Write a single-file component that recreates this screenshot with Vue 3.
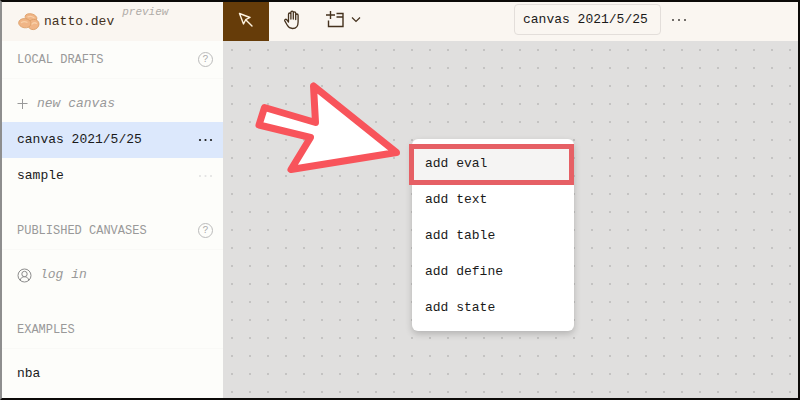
<script setup>
import { ref } from 'vue'

const title = ref('canvas 2021/5/25')
const drafts = [
  { name: 'canvas 2021/5/25', active: true },
  { name: 'sample', active: false },
]
const actions = ['add eval', 'add text', 'add table', 'add define', 'add state']
</script>

<template>
  <div class="app">
    <aside class="sidebar">
      <header class="brand">
        <svg class="logo" width="22" height="18" viewBox="0 0 22 18" aria-hidden="true">
          <g fill="#f0b586" stroke="#dc9f68" stroke-width=".8">
            <ellipse cx="13" cy="4.600" rx="6" ry="3.800" transform="rotate(14 13 4.600)" />
            <ellipse cx="15.500" cy="11.500" rx="5.600" ry="5" transform="rotate(-25 15.500 11.500)" />
            <ellipse cx="6.800" cy="10.200" rx="6.200" ry="4.600" transform="rotate(8 6.800 10.200)" />
          </g>
          <g fill="none" stroke="#f8d0a8" stroke-width="1.300" stroke-linecap="round">
            <path d="M10 3.800q3-1.300 6 .9M3.500 9.500q2.500-1.800 5.500-.2M14 11q2.500-2.200 4.500-.6" />
          </g>
        </svg>
        <a class="name" href="#">natto.dev</a>
        <em class="preview">preview</em>
      </header>

      <section>
        <h2>
          LOCAL DRAFTS
          <button class="help" aria-label="About local drafts">?</button>
        </h2>
        <ul>
          <li>
            <button class="row muted">
              <svg width="12" height="12" viewBox="0 0 12 12" aria-hidden="true">
                <path d="M5.500 1v10M.5 5.500h10" fill="none" stroke="#999" />
              </svg>
              <em>new canvas</em>
            </button>
          </li>
          <li v-for="draft in drafts" :key="draft.name" :class="{ active: draft.active }">
            <a class="row" href="#">{{ draft.name }}</a>
            <button class="more" :aria-label="'Options for ' + draft.name">
              <svg width="16" height="4" viewBox="0 0 16 4" fill="currentColor" aria-hidden="true">
                <circle cx="3" cy="2" r="1.100" /><circle cx="8.500" cy="2" r="1.100" /><circle cx="14" cy="2" r="1.100" />
              </svg>
            </button>
          </li>
        </ul>
      </section>

      <section>
        <h2>
          PUBLISHED CANVASES
          <button class="help" aria-label="About published canvases">?</button>
        </h2>
        <ul>
          <li>
            <button class="row muted">
              <svg width="15" height="15" viewBox="0 0 15 15" fill="none" stroke="#8c8c8c" aria-hidden="true">
                <circle cx="7.500" cy="7.500" r="6.500" />
                <circle cx="7.500" cy="6" r="2.700" />
                <path d="M3.200 12.500c.4-2.500 2-3.800 4.300-3.800s3.900 1.300 4.300 3.800" />
              </svg>
              <em>log in</em>
            </button>
          </li>
        </ul>
      </section>

      <section>
        <h2>EXAMPLES</h2>
        <ul>
          <li><a class="row" href="#">nba</a></li>
        </ul>
      </section>
    </aside>

    <main class="workspace">
      <div class="toolbar">
        <button class="tool selected" aria-label="Select">
          <svg width="16" height="16" viewBox="0 0 16 16" fill="none" stroke="#fff3e0" stroke-width="1.400" stroke-linejoin="round" stroke-linecap="round" aria-hidden="true">
            <path d="M1.500 1.500l10.500 4-4.300 2.200-2.200 4.300zM7.700 7.700l6.300 6.300" />
          </svg>
        </button>
        <button class="tool" aria-label="Pan">
          <svg width="18" height="20" viewBox="0 0 18 20" fill="none" stroke="#44311d" stroke-width="1.300" stroke-linejoin="round" stroke-linecap="round" aria-hidden="true">
            <path d="M5.500 11.500V4.200a1.200 1.200 0 0 1 2.400 0V9M7.900 9V2.300a1.200 1.200 0 0 1 2.400 0V9M10.300 9V3a1.200 1.200 0 0 1 2.400 0v6.500M12.700 9.500V5.200a1.200 1.200 0 0 1 2.400 0V12c0 4-2 6.500-5.500 6.500-3 0-4.300-1.300-5.300-3.200l-2.500-4.400c-.7-1.300 1-2.200 1.900-1.200l1.800 2.300" />
          </svg>
        </button>
        <button class="tool add" aria-label="Add pane">
          <svg width="20" height="20" viewBox="0 0 20 20" fill="none" stroke="#44311d" stroke-width="1.400" aria-hidden="true">
            <path d="M4.500 1v8M0 5h9M2.500 10.500v6h14.500V3.500H10.500M10.500 7H17" />
          </svg>
          <svg width="10" height="6" viewBox="0 0 10 6" fill="none" stroke="#44311d" stroke-width="1.200" aria-hidden="true">
            <path d="M1 .5l4 4 4-4" />
          </svg>
        </button>
        <input v-model="title" class="title" type="text" aria-label="Canvas title" />
        <button class="more" aria-label="Canvas options">
          <svg width="16" height="4" viewBox="0 0 16 4" fill="currentColor" aria-hidden="true">
            <circle cx="2" cy="2" r="1" /><circle cx="8" cy="2" r="1" /><circle cx="14" cy="2" r="1" />
          </svg>
        </button>
      </div>

      <div class="canvas">
        <div class="menu">
          <button v-for="action in actions" :key="action">{{ action }}</button>
          <span class="highlight"></span>
        </div>
        <svg class="pointer" width="150" height="100" viewBox="0 0 150 100" aria-hidden="true">
          <path d="M143.500 72.500L60.500 6l2 36.500-51-15L6 45l51.500 12.500L38 89.500z" fill="#fff" stroke="#f8545b" stroke-width="7" stroke-linejoin="round" />
        </svg>
      </div>
    </main>
  </div>
</template>

<style>
body {
  margin: 0;
}
</style>

<style scoped>
.app {
  box-sizing: border-box;
  display: flex;
  min-height: 100vh;
  border: 2px solid #0c0a08;
  border-left-color: #8e8e8e;
  background: #fdfdfa;
  color: #1a1a1a;
  font: 13px/20px "Liberation Mono", monospace;
}

button,
input {
  margin: 0;
  padding: 0;
  border: 0;
  background: none;
  color: inherit;
  font: inherit;
}

a {
  color: inherit;
  text-decoration: none;
}

.sidebar {
  flex: none;
  width: 221px;
}

.brand {
  display: flex;
  align-items: center;
  gap: 4px;
  height: 39px;
  padding-left: 16px;
  background: #faf6f1;
}

.name {
  color: #44311d;
}

.preview {
  align-self: flex-start;
  margin-left: 4px;
  color: #b0aca8;
  font-size: 11px;
}

h2 {
  display: flex;
  align-items: center;
  justify-content: space-between;
  box-sizing: border-box;
  height: 38px;
  margin: 0;
  padding: 0 10px 0 15px;
  border-bottom: 1px solid #f9f9f6;
  color: #999;
  font-size: 12px;
  font-weight: 400;
}

.help {
  box-sizing: border-box;
  width: 15px;
  height: 15px;
  border: 1px solid #bbb;
  border-radius: 50%;
  color: #aaa;
  font-size: 10px;
  line-height: 13px;
}

ul {
  margin: 0;
  padding: 7px 0 0;
  list-style: none;
}

section + section {
  margin-top: 18px;
}

li {
  display: flex;
  align-items: center;
  height: 36px;
  padding: 0 10px 0 15px;
}

.row {
  display: flex;
  flex: 1;
  align-items: center;
  gap: 8px;
  text-align: left;
}

.muted {
  color: #999;
}

.more {
  display: flex;
  color: #e2e2e2;
}

.active {
  background: #dce8fc;
}

.active .more {
  color: #1a1a1a;
}

.workspace {
  display: flex;
  flex: 1;
  flex-direction: column;
  min-width: 0;
}

.toolbar {
  display: flex;
  align-items: center;
  height: 39px;
  padding-right: 111px;
  background: #faf6f1;
}

.tool {
  display: flex;
  align-items: center;
  justify-content: center;
  align-self: stretch;
  width: 46px;
  padding-bottom: 4px;
}

.selected {
  background: #663c09;
}

.add {
  gap: 5px;
  width: 56px;
}

.title {
  box-sizing: border-box;
  width: 147px;
  height: 31px;
  margin: 0 10px 4px auto;
  padding: 0 8px;
  border: 1px solid #e3deda;
  border-radius: 4px;
}

.toolbar .more {
  margin-bottom: 4px;
  color: #44403c;
}

.canvas {
  position: relative;
  flex: 1;
  background: #e0dfde radial-gradient(circle, #c4c3c2 0, #c4c3c2 1px, transparent 1px) 0 0 / 18px 18px;
}

.menu {
  position: absolute;
  top: 98px;
  left: 189px;
  display: flex;
  flex-direction: column;
  box-sizing: border-box;
  width: 162px;
  padding: 7px 0 5px;
  border-radius: 6px;
  background: #fff;
  box-shadow: 0 3px 7px rgb(0 0 0 / 20%);
}

.menu button {
  height: 36px;
  padding: 0 13px;
  text-align: left;
}

.menu button:first-child {
  background: #f5f4f3;
}

.highlight {
  position: absolute;
  inset: 5px 0 auto -3px;
  box-sizing: border-box;
  height: 41px;
  border: 5px solid #e66065;
}

.pointer {
  position: absolute;
  top: 39px;
  left: 30px;
}
</style>
